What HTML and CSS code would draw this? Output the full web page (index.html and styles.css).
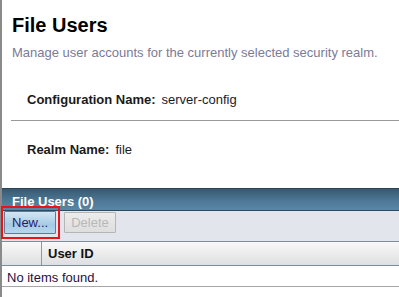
FILE: index.html
```html
<!DOCTYPE html>
<html lang="en">
  <head>
    <meta charset="UTF-8" />
    <title>File Users</title>
    <link rel="stylesheet" href="styles.css">
  </head>
  <body>
    <div class="page">
      <div class="head">
        <h1>File Users</h1>
        <p class="help">Manage user accounts for the currently selected security realm.</p>
      </div>
      <div class="props">
        <div class="prop">
          <span class="label">Configuration Name:</span>
          <span class="val">server-config</span>
        </div>
        <div class="prop realm">
          <span class="label">Realm Name:</span>
          <span class="val">file</span>
        </div>
      </div>
      <div class="table">
        <div class="caption">File Users (0)</div>
        <div class="toolbar">
          <div class="new-wrap">
            <button class="btn new">New...</button>
            <span class="mark"></span>
          </div>
          <button class="btn" disabled>Delete</button>
        </div>
        <div class="thead">
          <div class="sel"></div>
          <div class="col">User ID</div>
        </div>
        <div class="empty">No items found.</div>
      </div>
    </div>
  </body>
</html>
```

FILE: styles.css
```css
* {
  padding: 0;
  margin: 0;
  box-sizing: border-box;
  font-family: 'Liberation Sans', Arial, sans-serif;
}
body {
  background: #fff;
}
.page {
  border-left: 2px solid #8a8a8a;
  min-height: 297px;
}
.head {
  padding: 14px 0 0 10px;
  height: 80px;
}
h1 {
  font-size: 20px;
  font-weight: bold;
  color: #000;
  line-height: 22px;
}
.help {
  margin-top: 9px;
  font-size: 13px;
  color: #7a7a99;
}
.props {
  height: 108px;
}
.prop {
  margin-left: 9px;
  padding: 12px 0 0 16px;
  height: 41px;
  display: flex;
  align-items: baseline;
  gap: 6px;
  border-bottom: 1px solid #9a9a9a;
}
.prop.realm {
  border-bottom: none;
  padding-top: 21px;
}
.label {
  font-size: 13px;
  font-weight: bold;
  color: #1a1a1a;
}
.val {
  font-size: 13px;
  color: #1a1a2a;
}
.table {
  border-top: 1px solid #2b4459;
}
.caption {
  height: 22px;
  padding: 5px 0 0 10px;
  font-size: 13px;
  font-weight: bold;
  color: #fff;
  background: linear-gradient(#37596f, #4d7795 55%, #5b87a6);
  border-bottom: 1px solid #2e4a5e;
}
.toolbar {
  height: 31px;
  background: #e2e6ec;
  border-bottom: 1px solid #7b8d99;
  display: flex;
  align-items: flex-start;
  gap: 8px;
  padding: 0 0 0 2px;
}
.new-wrap {
  position: relative;
}
.btn {
  height: 21px;
  width: 52px;
  font-size: 13px;
  border: 1px solid #8f9aa5;
  background: linear-gradient(#f2f2f2, #dcdcdc);
  color: #b8b8b8;
  border-radius: 1px;
  margin-top: 1px;
}
.new {
  width: 52px;
  height: 23px;
  margin-top: 0;
  color: #2a1a6b;
  border-color: #5d7c93;
  background: linear-gradient(#d4e6f3, #a6cbe6 60%, #b6d6ec);
  text-align: left;
  padding-left: 7px;
}
.btn:disabled {
  border-color: #b5b5b5;
  background: linear-gradient(#ececec, #dedede);
}
.mark {
  position: absolute;
  left: -3px;
  top: -5px;
  width: 59px;
  height: 33px;
  border: 2px solid #e8141b;
}
.thead {
  height: 24px;
  display: flex;
  background: linear-gradient(#f9f9f9, #eeeeee 40%, #dedfe3);
  border-bottom: 1px solid #7b8d99;
}
.sel {
  width: 40px;
  border-right: 1px solid #8a9aa5;
}
.col {
  padding: 4px 0 0 6px;
  font-size: 13px;
  font-weight: bold;
  color: #111;
}
.empty {
  height: 21px;
  padding: 4px 0 0 5px;
  font-size: 13px;
  color: #1f1040;
  border-bottom: 1px solid #a6a6a6;
}
```
